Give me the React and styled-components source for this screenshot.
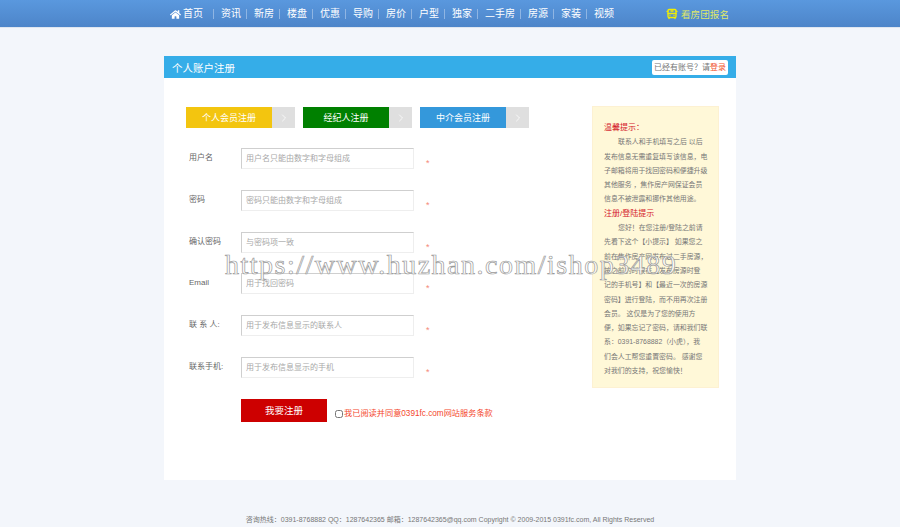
import React from 'react';
import styled, { createGlobalStyle } from 'styled-components';
import { FaHome } from 'react-icons/fa';
import { BusFront, ChevronRight } from 'lucide-react';

const GlobalStyle = createGlobalStyle`
  html, body {
    margin: 0;
    padding: 0;
    background: #f3f6fb;
    font-family: "Liberation Sans", "Noto Sans CJK SC", sans-serif;
  }
`;

const Page = styled.div`
  position: relative;
  width: 900px;
  height: 527px;
  overflow: hidden;
`;

const Header = styled.div`
  height: 28px;
  background: linear-gradient(#5a98de, #4d85c9);
  border-bottom: 1px solid #dfe6f0;
  box-sizing: border-box;
`;

const Nav = styled.div`
  width: 572px;
  height: 100%;
  margin: 0 auto;
  padding: 1px 0 0 6px;
  box-sizing: border-box;
  display: flex;
  align-items: center;
  color: #fff;
  font-size: 10px;
`;

const NavHome = styled.a`
  display: flex;
  align-items: center;
  gap: 2px;
  padding-right: 10px;
  height: 10px;
  line-height: 10px;
  border-right: 1px solid #8fb5e3;
  margin-right: 7px;
`;

const NavItem = styled.a`
  height: 10px;
  line-height: 10px;
  padding-right: ${p => (p.$last ? 0 : 5)}px;
  margin-right: 7px;
  border-right: ${p => (p.$last ? 'none' : '1px solid #8fb5e3')};
`;

const GroupLink = styled.a`
  margin-left: auto;
  margin-right: 7px;
  display: flex;
  align-items: center;
  gap: 3px;
  color: #dfe868;
  font-size: 9.6px;
`;

const Card = styled.div`
  width: 572px;
  margin: 28px auto 0;
  background: #fff;
`;

const TitleBar = styled.div`
  height: 22px;
  padding: 0 8px;
  background: #35ade8;
  display: flex;
  align-items: center;
  justify-content: space-between;
  color: #fff;
  font-size: 10.5px;
`;

const LoginHint = styled.div`
  height: 15px;
  line-height: 15px;
  padding: 0 2px;
  background: #fff;
  border-radius: 2px;
  color: #777;
  font-size: 8px;
  white-space: nowrap;
  b {
    font-weight: normal;
    color: #f0522c;
  }
`;

const Content = styled.div`
  height: 402px;
  padding: 28px 17px 0 22px;
  box-sizing: border-box;
  display: flex;
  justify-content: space-between;
`;

const FormColumn = styled.div`
  width: 400px;
`;

const Tabs = styled.div`
  display: flex;
  gap: 8px;
  margin: 1px 0 20px;
`;

const Tab = styled.div`
  display: flex;
  height: 21px;
`;

const TabLabel = styled.div`
  width: 86px;
  background: ${p => p.$color};
  color: #fff;
  font-size: 9px;
  line-height: 23px;
  text-align: center;
`;

const TabArrow = styled.div`
  width: 23px;
  background: #dfdfdf;
  color: #fff;
  display: flex;
  align-items: center;
  justify-content: center;
`;

const Row = styled.div`
  display: flex;
  height: 21px;
  margin-bottom: 20.8px;
`;

const Label = styled.label`
  width: 52px;
  padding-left: 3px;
  line-height: 19px;
  font-size: 8px;
  color: #666;
  white-space: pre;
`;

const Input = styled.input`
  width: 173px;
  height: 21px;
  padding: 0 4px;
  box-sizing: border-box;
  border: 1px solid #eee;
  border-top-color: #cfcfcf;
  border-left-color: #cfcfcf;
  background: #fff;
  font-family: inherit;
  font-size: 8px;
  outline: none;
  &::placeholder {
    color: #a8a8a8;
    opacity: 1;
  }
`;

const Star = styled.span`
  margin: 10px 0 0 12px;
  color: #f58a78;
  font-size: 9px;
  line-height: 10px;
`;

const SubmitRow = styled.div`
  display: flex;
  align-items: flex-end;
  padding-left: 55px;
`;

const SubmitButton = styled.button`
  width: 86px;
  height: 23px;
  padding: 0;
  border: none;
  background: #cd0000;
  color: #fff;
  font-family: inherit;
  font-size: 9.5px;
`;

const Agree = styled.label`
  display: flex;
  align-items: center;
  gap: 1px;
  margin: 0 0 2px 8px;
  color: #f4472c;
  font-size: 8.2px;
  line-height: 12px;
  input {
    width: 8px;
    height: 8px;
    margin: 0;
    accent-color: #999;
  }
`;

const Tips = styled.div`
  width: 127px;
  height: 282px;
  padding: 14px 10px 0 11px;
  box-sizing: border-box;
  background: #fff8d8;
  border: 1px solid #fdf1d2;
  color: #777;
  font-size: 6.9px;
  line-height: 14.3px;
  white-space: nowrap;
`;

const TipsTitle = styled.div`
  color: #d4202a;
  font-size: 8px;
`;

const TipsLine = styled.div`
  padding-left: ${p => (p.$indent ? 14 : 0)}px;
`;

const Footer = styled.div`
  margin-top: 35px;
  text-align: center;
  color: #777;
  font-size: 7px;
  line-height: 10px;
`;

const Watermark = styled.div`
  position: absolute;
  left: 225px;
  top: 248px;
  font-family: "Liberation Serif", serif;
  font-size: 28px;
  line-height: 34px;
  letter-spacing: 1.5px;
  white-space: nowrap;
  color: rgba(255, 255, 255, 0.85);
  -webkit-text-stroke: 0.7px #999;
  pointer-events: none;
`;

const navItems = ['资讯', '新房', '楼盘', '优惠', '导购', '房价', '户型', '独家', '二手房', '房源', '家装', '视频'];

const tabs = [
  { label: '个人会员注册', color: '#f3c50f' },
  { label: '经纪人注册', color: '#008000' },
  { label: '中介会员注册', color: '#3498db' },
];

const fields = [
  { label: '用户名', hint: '用户名只能由数字和字母组成' },
  { label: '密码', hint: '密码只能由数字和字母组成' },
  { label: '确认密码', hint: '与密码项一致' },
  { label: 'Email', hint: '用于找回密码' },
  { label: '联 系 人:', hint: '用于发布信息显示的联系人' },
  { label: '联系手机:', hint: '用于发布信息显示的手机' },
];

const tipsOne = [
  '发布信息无需重复填写该信息\uFF0C电',
  '子邮箱将用于找回密码和便捷升级',
  '其他服务 \uFF0C焦作房产网保证会员',
  '信息不被泄露和挪作其他用途。',
];

const tipsTwo = [
  '先看下这个【小提示】 如果您之',
  '前在焦作房产网发布过二手房源\uFF0C',
  '按之前的时候在【发布房源时登',
  '记的手机号】和【最近一次的房源',
  '密码】进行登陆\uFF0C而不用再次注册',
  '会员。 这仅是为了您的使用方',
  '便\uFF0C如果忘记了密码\uFF0C请和我们联',
  '系\uFF1A0391-8768882\uFF08小虎\uFF09\uFF0C我',
  '们会人工帮您重置密码。 感谢您',
  '对我们的支持\uFF0C祝您愉快\uFF01',
];

const App = () => (
  <Page>
    <GlobalStyle />
    <Header>
      <Nav>
        <NavHome>
          <FaHome size={11} />
          首页
        </NavHome>
        {navItems.map((item, i) => (
          <NavItem key={item} $last={i === navItems.length - 1}>{item}</NavItem>
        ))}
        <GroupLink>
          <BusFront size={12} color="#f2ee00" strokeWidth={2.6} />
          看房团报名
        </GroupLink>
      </Nav>
    </Header>

    <Card>
      <TitleBar>
        个人账户注册
        <LoginHint>{'已经有账号\uFF1F请'}<b>登录</b></LoginHint>
      </TitleBar>
      <Content>
        <FormColumn>
          <Tabs>
            {tabs.map(tab => (
              <Tab key={tab.label}>
                <TabLabel $color={tab.color}>{tab.label}</TabLabel>
                <TabArrow><ChevronRight size={12} strokeWidth={1.5} /></TabArrow>
              </Tab>
            ))}
          </Tabs>
          {fields.map(field => (
            <Row key={field.label}>
              <Label>{field.label}</Label>
              <Input placeholder={field.hint} />
              <Star>*</Star>
            </Row>
          ))}
          <SubmitRow>
            <SubmitButton>我要注册</SubmitButton>
            <Agree>
              <input type="checkbox" />
              我已阅读并同意0391fc.com网站服务条款
            </Agree>
          </SubmitRow>
        </FormColumn>
        <Tips>
          <TipsTitle>{'温馨提示\uFF1A'}</TipsTitle>
          <TipsLine $indent>联系人和手机填写之后 以后</TipsLine>
          {tipsOne.map(line => <TipsLine key={line}>{line}</TipsLine>)}
          <TipsTitle>注册/登陆提示</TipsTitle>
          <TipsLine $indent>{'您好\uFF01在您注册/登陆之前请'}</TipsLine>
          {tipsTwo.map(line => <TipsLine key={line}>{line}</TipsLine>)}
        </Tips>
      </Content>
    </Card>

    <Footer>
      {'咨询热线\uFF1A0391-8768882 QQ\uFF1A1287642365 邮箱\uFF1A1287642365@qq.com Copyright © 2009-2015 0391fc.com, All Rights Reserved'}
    </Footer>

    <Watermark>https://www.huzhan.com/ishop3489</Watermark>
  </Page>
);

export default App;
